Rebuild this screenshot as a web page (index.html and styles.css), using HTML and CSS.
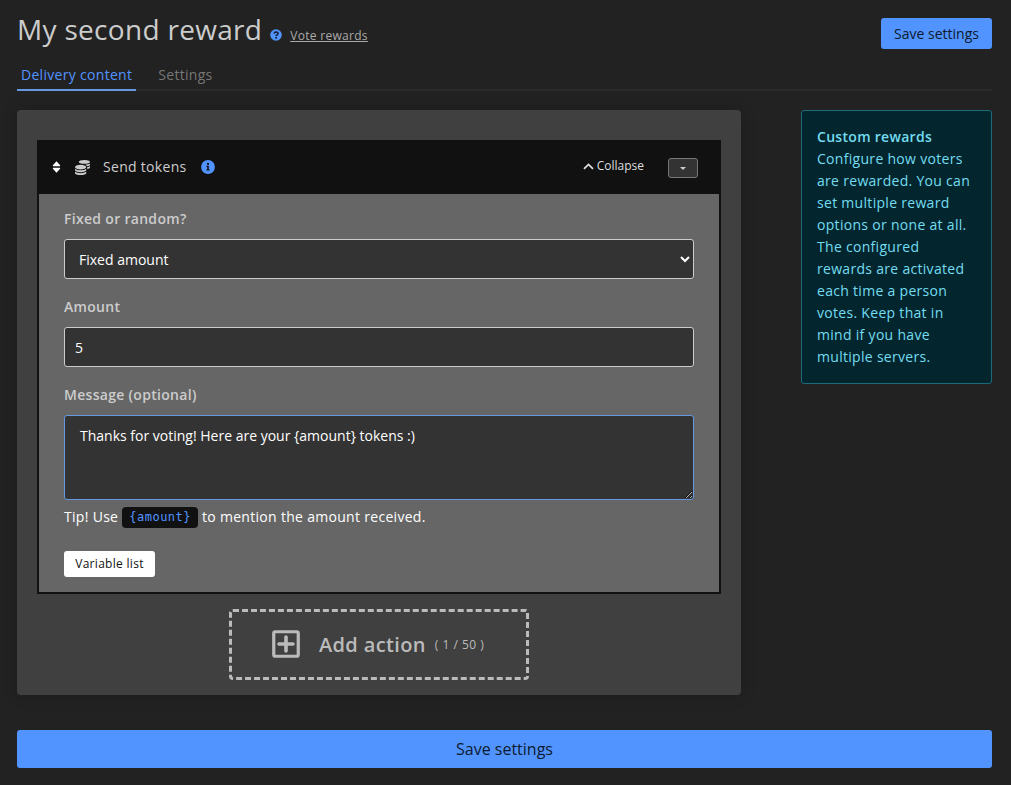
FILE: index.html
```html
<!DOCTYPE html>
<html lang="en">
<head>
<meta charset="utf-8">
<title>My second reward</title>
<link rel="stylesheet" href="styles.css">
</head>
<body>
<div class="page">
  <header class="header">
    <div class="heading">
      <h1 class="title">My second reward</h1>
      <svg class="help-icon" viewBox="0 0 12 12"><circle cx="6" cy="6" r="5.8" fill="#5294ff"/><path d="M4.100 4.600C4.200 3.400 5.100 3 6.100 3c1.100 0 1.900.6 1.900 1.600C8 5.700 6.200 5.800 6.100 7" fill="none" stroke="#151d2b" stroke-width="1.500"/><circle cx="6.100" cy="8.800" r=".95" fill="#151d2b"/></svg>
      <a class="help-link">Vote rewards</a>
    </div>
    <button class="btn btn-top">Save settings</button>
  </header>
  <nav class="tabs">
    <a class="tab active">Delivery content</a>
    <a class="tab">Settings</a>
  </nav>
  <div class="columns">
    <main class="panel">
      <section class="card">
        <div class="card-head">
          <svg class="sort-icon" viewBox="0 0 8 12"><path d="M4 .3 7.600 4.200Q8.100 5.200 7.200 5.200H.8Q-.1 5.200 .4 4.200ZM4 11.700 7.600 7.800Q8.100 6.800 7.200 6.800H.8Q-.1 6.800 .4 7.800Z" fill="#fff"/></svg>
          <svg class="coins-icon" viewBox="0 0 512 512" fill="#ccc"><path d="M0 405.300V448c0 35.300 86 64 192 64s192-28.700 192-64v-42.700C342.700 434.400 267.200 448 192 448S41.300 434.400 0 405.300zM320 128c106 0 192-28.700 192-64S426 0 320 0 128 28.700 128 64s86 64 192 64zM0 300.400V352c0 35.300 86 64 192 64s192-28.700 192-64v-51.600c-41.300 34-116.900 51.600-192 51.600S41.300 334.400 0 300.400zm416 11c57.300-11.100 96-31.700 96-55.400v-42.700c-23.200 16.400-57.300 27.600-96 34.500v63.600zM192 160C86 160 0 195.800 0 240s86 80 192 80 192-35.800 192-80-86-80-192-80zm219.300 56.300c60-10.800 100.700-32 100.700-56.300v-42.700c-35.500 25.100-96.500 38.600-160.700 41.800 29.500 14.300 51.200 33.500 60 57.200z"/></svg>
          <span class="card-title">Send tokens</span>
          <svg class="info-icon" viewBox="0 0 14 14"><circle cx="7" cy="7" r="6.900" fill="#5294ff"/><path d="M5.300 5.700h2.500v3.900h.9v1H5.300v-1h.9V6.700h-.9z" fill="#111"/><circle cx="7" cy="3.900" r="1.150" fill="#111"/></svg>
          <a class="collapse"><svg class="chevron" viewBox="0 0 11 7"><path d="M1 5.800 5.500 1.400 10 5.800" fill="none" stroke="#ddd" stroke-width="1.800"/></svg>Collapse</a>
          <button class="menu-btn"><span class="caret"></span></button>
        </div>
        <div class="card-body">
          <label class="label">Fixed or random?</label>
          <select class="field select"><option>Fixed amount</option></select>
          <label class="label">Amount</label>
          <input class="field" type="text" value="5">
          <label class="label">Message (optional)</label>
          <textarea class="field message">Thanks for voting! Here are your {amount} tokens :)</textarea>
          <p class="tip">Tip! Use <code class="code">{amount}</code> to mention the amount received.</p>
          <button class="variables">Variable list</button>
        </div>
      </section>
      <div class="add">
        <svg class="plus-icon" viewBox="0 0 28 28"><rect x="1.750" y="1.750" width="24.500" height="24.500" rx="1.500" fill="none" stroke="#bbb" stroke-width="3.200"/><path d="M14 7v14M7 14h14" stroke="#bbb" stroke-width="3.600" stroke-linecap="round"/></svg>
        <span class="add-label">Add action</span>
        <span class="add-count">( 1 / 50 )</span>
      </div>
    </main>
    <aside class="info"><strong>Custom rewards</strong><br>Configure how voters are rewarded. You can set multiple reward options or none at all. The configured rewards are activated each time a person votes. Keep that in mind if you have multiple servers.</aside>
  </div>
  <button class="btn btn-bottom">Save settings</button>
</div>
</body>
</html>
```
FILE: styles.css
```css
* { box-sizing: border-box; }
body {
  margin: 0;
  background: #222;
  color: #ccc;
  font: 14px/22px "Open Sans", "Noto Sans", sans-serif;
  letter-spacing: .3px;
  overflow: hidden;
}
button, select, input, textarea { font-family: inherit; margin: 0; }
.page { padding: 0 19px 0 17px; }
.header { display: flex; justify-content: space-between; height: 60px; }
.heading { display: flex; align-items: baseline; padding-top: 8px; }
.title { margin: 0; font-size: 28px; line-height: 42px; font-weight: 400; }
.help-icon { width: 12px; height: 12px; margin: 21px 8px 0 8px; align-self: flex-start; }
.help-link { font-size: 12px; text-decoration: underline; color: #aaa; }
.btn { border: 0; border-radius: 3px; background: #5294ff; color: #0c1a30; padding: 0; }
.btn-top { width: 111px; height: 31px; margin-top: 18px; font-size: 14px; }
.tabs { display: flex; height: 31px; border-bottom: 2px solid #2b2b2b; gap: 18px; }
.tab { height: 31px; padding: 4px 4px 0; color: #777; }
.tab.active { color: #5294ff; border-bottom: 2px solid #6698e0; }
.columns { display: flex; justify-content: space-between; align-items: flex-start; margin-top: 19px; }
.panel { width: 724px; height: 585px; padding: 30px 20px 0; background: #404040; border-radius: 4px; box-shadow: 0 0 16px rgba(0, 0, 0, .2); }
.card { height: 454px; border: 2px solid #111; background: #666; }
.card-head { display: flex; align-items: center; height: 52px; padding: 0 21px 2px 13px; background: #111; }
.sort-icon { width: 9px; height: 12px; }
.coins-icon { width: 15px; height: 15px; margin-left: 14px; }
.card-title { margin-left: 13px; }
.info-icon { width: 14px; height: 14px; margin-left: 14px; }
.collapse { display: flex; align-items: center; margin: 0 0 2px auto; font-size: 12px; letter-spacing: 0; color: #ddd; }
.chevron { width: 11px; height: 7px; margin-right: 3px; }
.menu-btn { display: flex; align-items: center; justify-content: center; width: 30px; height: 20px; margin: 1px 0 0 24px; padding: 2px 0 0; background: #333; border: 1px solid #777; border-radius: 3px; }
.caret { border: 3px solid transparent; border-top-color: #ccc; border-bottom: 0; }
.card-body { padding: 14px 25px 0; }
.label { display: block; height: 31px; font-weight: 600; color: #ccc; }
.field { display: block; width: 630px; height: 40px; margin-bottom: 17px; padding: 0 10px; border: 1px solid #ccc; border-radius: 3px; background: #333; color: #fff; font-size: 14px; outline: 0; }
.select { padding: 0 0 0 10px; }
.message { height: 85px; margin-bottom: 6px; padding: 9px 15px; border-color: #6698e0; line-height: 22px; letter-spacing: 0; resize: vertical; }
.tip { height: 22px; margin: 0 0 23px; color: #fff; }
.code { display: inline-block; padding: 0 7px; border-radius: 4px; background: #111; color: #5294ff; font: 12px/21px "DejaVu Sans Mono", monospace; letter-spacing: .5px; vertical-align: 1px; }
.variables { display: block; width: 91px; height: 26px; padding: 0 0 2px; border: 0; border-radius: 3px; background: #fff; color: #111; font-size: 12px; letter-spacing: .3px; }
.add { display: flex; align-items: center; width: 300px; height: 71px; margin: 15px auto 0; padding-left: 40px; border: 3px dashed #bbb; border-radius: 4px; color: #bbb; }
.plus-icon { width: 28px; height: 28px; margin-bottom: 2px; }
.add-label { margin-left: 19px; font-size: 20px; font-weight: 600; letter-spacing: .35px; }
.add-count { margin-left: 9px; font-size: 12px; letter-spacing: .5px; }
.info { width: 191px; height: 274px; padding: 15px; border: 1px solid #1b6b7a; border-radius: 3px; background: #03262e; color: #74dcf0; }
.info strong { font-weight: 600; }
.btn-bottom { width: 100%; height: 38px; margin-top: 35px; font-size: 16px; display: block; }
```
